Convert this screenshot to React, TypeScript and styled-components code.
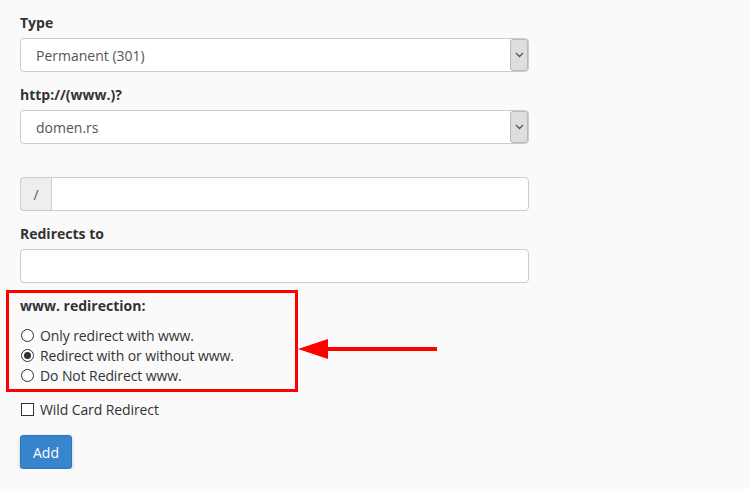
import React from "react";
import styled, { createGlobalStyle } from "styled-components";

const Global = createGlobalStyle`
  html, body { margin: 0; padding: 0; background: #fafafa; }
  body { font-family: "Open Sans", "Liberation Sans", sans-serif; color: #333; font-size: 14px; }
`;

const Page = styled.div`
  width: 509px;
  padding: 13px 0 0 20px;
`;

const FormGroup = styled.div<{ $mb?: number }>`
  margin-bottom: ${(p) => (p.$mb ?? 13)}px;
`;

const Label = styled.div<{ $empty?: boolean }>`
  font-weight: 700;
  font-size: 14px;
  line-height: 20px;
  height: 20px;
  margin-bottom: ${(p) => (p.$empty ? 0 : 5)}px;
  color: #333;
`;

const SelectBox = styled.div`
  box-sizing: border-box;
  height: 34px;
  border: 1px solid #ccc;
  border-radius: 4px;
  background: #fff;
  display: flex;
  align-items: center;
  justify-content: space-between;
  padding: 0 0 0 15px;
  color: #555;
  font-size: 14px;
`;

const DropBtn = styled.span`
  box-sizing: border-box;
  width: 18px;
  height: 32px;
  background: #dedede;
  border: 1px solid #b9b9b9;
  border-radius: 3px;
  display: flex;
  align-items: center;
  justify-content: center;
`;

const InputGroup = styled.div`
  display: flex;
  height: 34px;
  box-sizing: border-box;
`;

const Addon = styled.span`
  box-sizing: border-box;
  width: 31px;
  border: 1px solid #ccc;
  border-right: none;
  border-radius: 4px 0 0 4px;
  background: #eee;
  color: #555;
  display: flex;
  align-items: center;
  justify-content: center;
  font-size: 14px;
`;

const Input = styled.div<{ $grouped?: boolean }>`
  box-sizing: border-box;
  flex: 1;
  height: 34px;
  border: 1px solid #ccc;
  border-radius: ${(p) => (p.$grouped ? "0 4px 4px 0" : "4px")};
  background: #fff;
`;

const HighlightBox = styled.div`
  position: relative;
  box-sizing: border-box;
  width: 292px;
  margin: 7px 0 0 -14px;
  border: 3px solid #ff0000;
  padding: 3px 0 4px 11px;
`;

const GroupTitle = styled.div`
  font-weight: 700;
  font-size: 14px;
  line-height: 20px;
  margin-bottom: 9px;
`;

const OptionRow = styled.label`
  display: flex;
  align-items: center;
  height: 20px;
  font-size: 14px;
  color: #333;
  gap: 6px;
  letter-spacing: -0.1px;
`;

const Radio = styled.span<{ $checked?: boolean }>`
  box-sizing: border-box;
  width: 13px;
  height: 13px;
  border-radius: 50%;
  border: 1px solid #333;
  background: #fff;
  margin-left: 1px;
  display: flex;
  align-items: center;
  justify-content: center;
  &::after {
    content: "";
    width: 7px;
    height: 7px;
    border-radius: 50%;
    background: ${(p) => (p.$checked ? "#333" : "transparent")};
  }
`;

const Arrow = styled.svg`
  position: absolute;
  left: 289px;
  top: 44px;
`;

const CheckRow = styled(OptionRow)`
  margin-top: 7px;
`;

const Checkbox = styled.span`
  box-sizing: border-box;
  width: 13px;
  height: 13px;
  border: 1px solid #333;
  background: #fff;
  margin-left: 1px;
`;

const Button = styled.button`
  margin-top: 16px;
  box-sizing: border-box;
  height: 34px;
  width: 52px;
  background: #3685cd;
  border: 1px solid #2f77bb;
  border-radius: 3px;
  color: #fff;
  font-family: "Open Sans", "Liberation Sans", sans-serif;
  font-size: 14px;
  box-shadow: 0 2px 4px rgba(0, 0, 0, 0.2);
  padding: 0;
`;

const Chevron = () => (
  <svg width="9" height="6" viewBox="0 0 9 6">
    <path d="M1 1 L4.5 4.5 L8 1" fill="none" stroke="#555" strokeWidth="1.3" />
  </svg>
);

export default function App() {
  return (
    <>
      <Global />
      <Page>
        <FormGroup>
          <Label>Type</Label>
          <SelectBox>
            Permanent (301)
            <DropBtn>
              <Chevron />
            </DropBtn>
          </SelectBox>
        </FormGroup>
        <FormGroup>
          <Label>http://(www.)?</Label>
          <SelectBox>
            domen.rs
            <DropBtn>
              <Chevron />
            </DropBtn>
          </SelectBox>
        </FormGroup>
        <FormGroup>
          <Label $empty />
          <InputGroup>
            <Addon>/</Addon>
            <Input $grouped />
          </InputGroup>
        </FormGroup>
        <FormGroup $mb={0}>
          <Label>Redirects to</Label>
          <InputGroup>
            <Input />
          </InputGroup>
        </FormGroup>
        <HighlightBox>
          <GroupTitle>www. redirection:</GroupTitle>
          <OptionRow>
            <Radio />
            Only redirect with www.
          </OptionRow>
          <OptionRow>
            <Radio $checked />
            Redirect with or without www.
          </OptionRow>
          <OptionRow>
            <Radio />
            Do Not Redirect www.
          </OptionRow>
          <Arrow width="152" height="24" viewBox="0 0 152 24">
            <polygon points="0,12 30,2 30,22" fill="#ff0000" />
            <rect x="28" y="10" width="111" height="4" fill="#ff0000" />
          </Arrow>
        </HighlightBox>
        <CheckRow>
          <Checkbox />
          Wild Card Redirect
        </CheckRow>
        <Button>Add</Button>
      </Page>
    </>
  );
}
